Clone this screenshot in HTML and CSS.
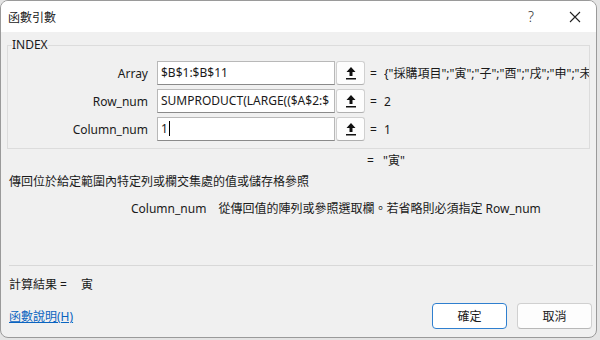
FILE: index.html
```html
<!DOCTYPE html>
<html lang="zh-Hant">
<head>
  <meta charset="UTF-8" />
  <title>函數引數</title>
  <link rel="stylesheet" href="styles.css">
</head>
<body>
  <div class="dialog">
    <!-- Title bar -->
    <div class="titlebar">
      <span class="title">函數引數</span>
      <span class="help">?</span>
      <svg class="close" width="12" height="12" viewBox="0 0 12 12">
        <path d="M1 1 L11 11 M11 1 L1 11" stroke="#222" stroke-width="1.1" fill="none"/>
      </svg>
    </div>

    <div class="content">
      <fieldset class="group">
        <legend>INDEX</legend>
        <div class="args">
          <label>Array</label>
          <div class="field">$B$1:$B$11</div>
          <button class="pick"><svg width="12" height="14" viewBox="0 0 12 14"><path d="M6 1 L10.5 6 H7.5 V10 H4.5 V6 H1.5 Z" fill="#111"/><rect x="1" y="12" width="10" height="1.5" fill="#111"/></svg></button>
          <span class="eq">=</span>
          <span class="val">{"採購項目";"寅";"子";"酉";"戌";"申";"未</span>

          <label>Row_num</label>
          <div class="field">SUMPRODUCT(LARGE(($A$2:$</div>
          <button class="pick"><svg width="12" height="14" viewBox="0 0 12 14"><path d="M6 1 L10.5 6 H7.5 V10 H4.5 V6 H1.5 Z" fill="#111"/><rect x="1" y="12" width="10" height="1.5" fill="#111"/></svg></button>
          <span class="eq">=</span>
          <span class="val">2</span>

          <label>Column_num</label>
          <div class="field">1<span class="caret"></span></div>
          <button class="pick"><svg width="12" height="14" viewBox="0 0 12 14"><path d="M6 1 L10.5 6 H7.5 V10 H4.5 V6 H1.5 Z" fill="#111"/><rect x="1" y="12" width="10" height="1.5" fill="#111"/></svg></button>
          <span class="eq">=</span>
          <span class="val">1</span>
        </div>
      </fieldset>

      <div class="result-line"><span class="eq">=</span><span>"寅"</span></div>

      <p class="desc">傳回位於給定範圍內特定列或欄交集處的值或儲存格參照</p>

      <div class="arg-help">
        <span class="arg-name">Column_num</span>
        <span>從傳回值的陣列或參照選取欄。若省略則必須指定 Row_num</span>
      </div>

      <hr class="sep">

      <div class="calc">計算結果 =<span class="calc-val">寅</span></div>

      <div class="footer">
        <a href="#" class="link">函數說明(H)</a>
        <div class="buttons">
          <button class="btn primary">確定</button>
          <button class="btn">取消</button>
        </div>
      </div>
    </div>
  </div>
</body>
</html>
```

FILE: styles.css
```css
html {
  background: #e4e4e4;
}

body {
  margin: 0;
  font-family: "Noto Sans", "Noto Sans CJK TC", sans-serif;
  font-size: 12px;
  color: #1a1a1a;
}

.dialog {
  width: 595px;
  height: 336px;
  border: 1px solid #9a9a9a;
  border-radius: 8px;
  background: #f0f0f0;
  overflow: hidden;
  display: flex;
  flex-direction: column;
}

.titlebar {
  height: 31px;
  background: #fff;
  display: flex;
  align-items: center;
  padding-left: 7px;
}

.title {
  flex: 1;
  font-size: 12px;
}

.help {
  font-size: 14px;
  font-weight: 300;
  color: #333;
  margin-right: 35px;
}

.close {
  margin-right: 15px;
}

.content {
  flex: 1;
  display: flex;
  flex-direction: column;
  padding: 0 4px 0 6px;
}

.group {
  margin: 5px 2px 0 0;
  padding: 0 0 7px 4px;
  border: 1px solid #dcdcdc;
  min-width: 0;
}

.group legend {
  padding: 0;
  line-height: 16px;
  font-size: 12px;
}

.args {
  margin-top: 8px;
  display: grid;
  grid-template-columns: 145px 178px 30px 19px 1fr;
  grid-auto-rows: 24px;
  row-gap: 4px;
  align-items: center;
}

.args label {
  text-align: right;
  padding-right: 9px;
}

.field {
  height: 22px;
  background: #fff;
  border: 1px solid #b8b8b8;
  border-bottom-color: #8a8a8a;
  line-height: 22px;
  padding-left: 3px;
  white-space: nowrap;
  overflow: hidden;
}

.caret {
  display: inline-block;
  width: 1px;
  height: 15px;
  background: #000;
  vertical-align: -3px;
  margin-left: 1px;
}

.pick {
  height: 24px;
  width: 29px;
  margin-left: 1px;
  padding: 0;
  background: #fdfdfd;
  border: 1px solid #d0d0d0;
  border-bottom-color: #b0b0b0;
  border-radius: 3px;
  display: flex;
  align-items: center;
  justify-content: center;
}

.eq {
  padding-left: 5px;
}

.val {
  white-space: nowrap;
  overflow: hidden;
}

.result-line {
  display: flex;
  padding-left: 355px;
  margin-top: 3px;
  height: 18px;
  line-height: 18px;
}

.result-line .eq {
  width: 16px;
}

.desc {
  margin: 3px 0 0 2px;
  height: 18px;
  line-height: 18px;
}

.arg-help {
  display: flex;
  gap: 12px;
  margin-top: 9px;
  padding-left: 124px;
  height: 18px;
  line-height: 18px;
}

.sep {
  margin: 47px 0 0 2px;
  border: none;
  border-top: 1px solid #d8d8d8;
  width: 584px;
}

.calc {
  margin: 10px 0 0 2px;
  height: 18px;
  line-height: 18px;
}

.calc-val {
  margin-left: 14px;
}

.footer {
  display: flex;
  align-items: center;
  justify-content: space-between;
  margin-top: 9px;
  padding-left: 2px;
}

.link {
  color: #0a64c0;
  text-decoration: underline;
}

.buttons {
  display: flex;
  gap: 10px;
}

.btn {
  width: 75px;
  height: 26px;
  font-family: "Noto Sans", "Noto Sans CJK TC", sans-serif;
  font-size: 12px;
  background: #fdfdfd;
  border: 1px solid #d0d0d0;
  border-bottom-color: #b8b8b8;
  border-radius: 4px;
  color: #1a1a1a;
}

.btn.primary {
  border: 1px solid #2f7fcf;
  background: #fff;
}
```
